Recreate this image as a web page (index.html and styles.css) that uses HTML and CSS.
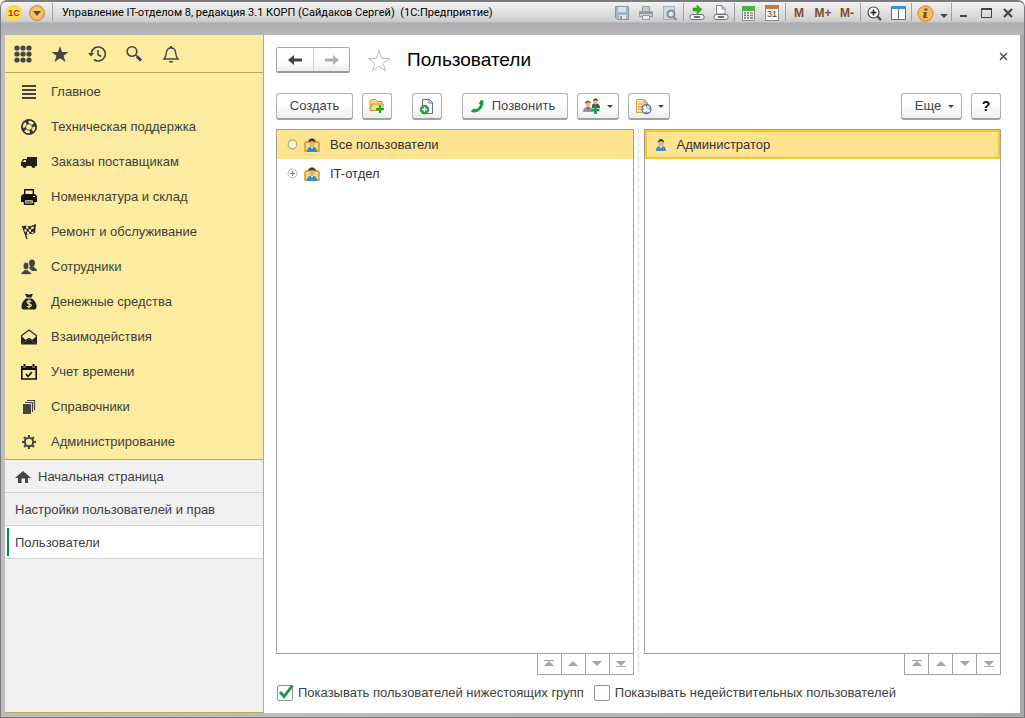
FILE: index.html
```html
<!DOCTYPE html>
<html lang="ru">
<head>
<meta charset="utf-8">
<title>Управление IT-отделом 8</title>
<link rel="stylesheet" href="styles.css">
</head>
<body>
<svg class="defs" aria-hidden="true">
  <symbol id="group" viewBox="0 0 16 16">
    <path d="M1 14V6l1-1h2l1-2h6l1 2h2l1 1v8z" fill="#fbd98a" stroke="#cf8f2c" stroke-width="1.400"/>
    <path d="M3 15c0-4 2-5.500 5-5.500s5 1.500 5 5.500z" fill="#3190c4"/>
    <path d="M6.500 9.500h3L8 12z" fill="#fff"/>
    <ellipse cx="8" cy="6.300" rx="2.700" ry="3.700" fill="#eeb066"/>
    <path d="M4.800 6C4.300-.5 11.700-.5 11.200 6 10.500 3.800 5.500 3.800 4.800 6z" fill="#3f3a35"/>
  </symbol>
  <symbol id="person" viewBox="0 0 12 14">
    <path d="M1 13c0-4 2-5 5-5s5 1 5 5z" fill="#3190c4"/>
    <path d="M4.500 8h3L6 10.500z" fill="#fff"/>
    <ellipse cx="6" cy="5" rx="2.600" ry="3.500" fill="#eeb066"/>
    <path d="M2.800 5C2.500-.5 9.500-.5 9.200 5 8 2.500 4 2.500 2.800 5z" fill="#3f3a35"/>
  </symbol>
  <symbol id="first" viewBox="0 0 10 8"><path d="M0 .500h10" stroke="#a6a6a6"/><path d="M5 1l5 5H0z" fill="#a6a6a6"/></symbol>
  <symbol id="up" viewBox="0 0 10 8"><path d="M5 1l5 5H0z" fill="#a6a6a6"/></symbol>
  <symbol id="down" viewBox="0 0 10 8"><path d="M5 6l5-5H0z" fill="#a6a6a6"/></symbol>
  <symbol id="last" viewBox="0 0 10 8"><path d="M0 6.500h10" stroke="#a6a6a6"/><path d="M5 6l5-5H0z" fill="#a6a6a6"/></symbol>
</svg>
<div class="window">
  <header class="titlebar">
    <button class="logo" aria-label="1С">1С</button>
    <button class="round" aria-label="Меню"><svg width="8" height="5"><path d="M0 0h8L4 5z" fill="#5a4a2c"/></svg></button>
    <i class="sep"></i>
    <h1 class="caption">Управление IT-отделом 8, редакция 3.1 КОРП (Сайдаков Сергей)&nbsp; (1С:Предприятие)</h1>
    <div class="tools">
      <button class="tool" aria-label="Сохранить"><svg width="14" height="14"><path d="M.500.500h13v13H2.500l-2-2z" fill="#a9b6c3" stroke="#8797a6"/><path d="M3 1h8v5H3z" fill="#dbe2e8"/><path d="M4 9h7v4H4z" fill="#dfe5ea"/><path d="M5 10h2v3H5z" fill="#8797a6"/></svg></button>
      <button class="tool" aria-label="Печать"><svg width="14" height="14"><path d="M3.500 5V.500h7V5M.500 5.500h13v5H.500z" fill="#c3cbd2" stroke="#8f9ba6"/><path d="M1 6h12v2H1z" fill="#8f9ba6"/><path d="M3.500 9.500h7v4h-7z" fill="#e8ebee" stroke="#8f9ba6"/></svg></button>
      <button class="tool" aria-label="Просмотр"><svg width="14" height="15"><path d="M.500.500h11v13H.500z" fill="#d3d9de" stroke="#a6b1bb"/><circle cx="8" cy="8" r="3.500" fill="#dfe5ea" stroke="#7e8f9e" stroke-width="2"/><path d="M10.500 11l3 3" stroke="#7e8f9e" stroke-width="2"/></svg></button>
      <i class="sep"></i>
      <button class="tool" aria-label="Перейти по ссылке"><svg width="16" height="16"><path d="M4 3h4V0l5 4.500L8 9V6H4z" fill="#31b51d" stroke="#188a10" stroke-width=".5"/><rect x="1" y="9.500" width="14" height="5" rx="2" fill="#eef1f3" stroke="#66737e"/><path d="M5 12h6" stroke="#66737e" stroke-width="2"/></svg></button>
      <button class="tool" aria-label="Получить ссылку"><svg width="16" height="16"><path d="M3.500 9V.500H9l3 3V9z" fill="#fff" stroke="#7a8793"/><path d="M9 1v3h3" fill="none" stroke="#7a8793"/><rect x="1" y="9.500" width="14" height="5" rx="2" fill="#eef1f3" stroke="#66737e"/><path d="M5 12h6" stroke="#66737e" stroke-width="2"/></svg></button>
      <i class="sep"></i>
      <button class="tool" aria-label="Калькулятор"><svg width="13" height="15"><path d="M.500.500h12v14H.500z" fill="#eef0f0" stroke="#8b9494"/><path d="M0 0h13v5H0z" fill="#44b649"/><path d="M2 7h2m1 0h2M2 9.500h2m1 0h2M2 12h2m1 0h2m1 0h3" stroke="#69757c" stroke-width="1.500"/><path d="M8 7h3M8 9.500h3" stroke="#e27070" stroke-width="1.500"/></svg></button>
      <button class="tool calendar" aria-label="Календарь">31</button>
      <i class="sep"></i>
      <button class="tool mem">M</button>
      <button class="tool mem">M+</button>
      <button class="tool mem">M-</button>
      <i class="sep"></i>
      <button class="tool" aria-label="Масштаб"><svg width="15" height="15"><circle cx="6.500" cy="6.500" r="5.500" fill="#fff" stroke="#444" stroke-width="1.200"/><path d="M3.500 6.500h6M6.500 3.500v6" stroke="#222" stroke-width="1.600"/><path d="M10.500 10.500l3.500 3.500" stroke="#444" stroke-width="2.200"/></svg></button>
      <button class="tool" aria-label="Панели"><svg width="15" height="14"><path d="M.500.500h14v13H.500z" fill="#fff" stroke="#5b6f80"/><path d="M0 0h15v3H0z" fill="#3b94d9"/><path d="M7.500 3v10" stroke="#5b6f80"/></svg></button>
      <i class="sep"></i>
      <button class="tool" aria-label="Справка"><svg width="17" height="17"><circle cx="8.500" cy="8.500" r="7.700" fill="#f7bd55" stroke="#c58a2c"/><path d="M7.500 3.500h3v2h-3zM6 7h4l-1 5h1.500v1H6l1-5H6z" fill="#61532f"/></svg></button>
      <button class="tool narrow" aria-label="Ещё"><svg width="8" height="10"><path d="M0 6h8l-4 4z" fill="#444"/></svg></button>
      <i class="sep"></i>
      <button class="tool sys" aria-label="Свернуть"><svg width="12" height="12"><path d="M2 8h7v2H2z" fill="#444"/></svg></button>
      <button class="tool sys" aria-label="Развернуть"><svg width="11" height="10"><path d="M.500.500h10v9H.500z" fill="none" stroke="#444"/><path d="M0 1h11" stroke="#444" stroke-width="2"/></svg></button>
      <button class="tool sys" aria-label="Закрыть"><svg width="10" height="10"><path d="M1 1l8 8M9 1L1 9" stroke="#444" stroke-width="2.200"/></svg></button>
    </div>
  </header>
  <div class="client">
    <aside class="sidebar">
      <div class="quick">
        <button aria-label="Разделы"><svg width="18" height="18" fill="#444"><circle cx="3" cy="3" r="2.600"/><circle cx="9" cy="3" r="2.600"/><circle cx="15" cy="3" r="2.600"/><circle cx="3" cy="9" r="2.600"/><circle cx="9" cy="9" r="2.600"/><circle cx="15" cy="9" r="2.600"/><circle cx="3" cy="15" r="2.600"/><circle cx="9" cy="15" r="2.600"/><circle cx="15" cy="15" r="2.600"/></svg></button>
        <button aria-label="Избранное"><svg width="18" height="18"><path d="M9 1l2 6h6.500l-5 3.700 2 6.300L9 13.200 3.500 17l2-6.300L.500 7H7z" fill="#444"/></svg></button>
        <button aria-label="История"><svg width="18" height="18" fill="none" stroke="#444" stroke-width="1.600"><path d="M3.300 8.500A7 7 0 1 1 6 14.500"/><path d="M0 8h6L3 11.500z" fill="#444" stroke="none"/><path d="M10 5v4.500l3 2"/></svg></button>
        <button aria-label="Поиск"><svg width="18" height="18" fill="none" stroke="#444"><circle cx="7" cy="6.500" r="4.800" stroke-width="1.600"/><path d="M10.500 10l2 1.500" stroke-width="1.500"/><path d="M12 11.500l4 4" stroke-width="3"/></svg></button>
        <button aria-label="Оповещения"><svg width="18" height="18"><path d="M2 14c2-2 2-3 2.300-6C4.600 4.500 6 3 9 3s4.400 1.500 4.700 5c.300 3 .300 4 2.300 6z" fill="none" stroke="#444" stroke-width="1.400"/><path d="M8 1h2v2H8zM6.500 16h5l-1 1.500h-3z" fill="#444"/></svg></button>
      </div>
      <nav class="menu">
        <a href="#"><svg viewBox="0 0 16 16"><path d="M1 2h14M1 6h14M1 10h14M1 14h14" stroke="#444" stroke-width="2"/></svg>Главное</a>
        <a href="#"><svg viewBox="0 0 16 16"><circle cx="8" cy="8" r="5.300" fill="none" stroke="#333" stroke-width="5"/><circle cx="8" cy="8" r="5" fill="none" stroke="#f8e99f" stroke-width="2.800" stroke-dasharray="5 2.850" stroke-dashoffset="1"/><circle cx="8" cy="8" r="7.200" fill="none" stroke="#333" stroke-width="1.200"/></svg>Техническая поддержка</a>
        <a href="#"><svg viewBox="0 0 16 16"><path d="M0 12V8.500L2 5h4V3h10v9z" fill="#222"/><path d="M1.500 8L3 6h2v2z" fill="#f8e99f"/><circle cx="3.500" cy="12" r="2" fill="#222"/><circle cx="12.500" cy="12" r="2" fill="#222"/></svg>Заказы поставщикам</a>
        <a href="#"><svg viewBox="0 0 16 16"><path d="M3.700 6V.700h8.600V6" fill="none" stroke="#111" stroke-width="1.400"/><path d="M2 5h12l2 2v6H0V7z" fill="#111"/><path d="M3.500 10.500h9v4.800h-9z" fill="#f8e99f" stroke="#111" stroke-width="1.400"/><path d="M5 13h6" stroke="#111"/><path d="M12 7.500h2" stroke="#f8e99f"/></svg>Номенклатура и склад</a>
        <a href="#"><svg viewBox="0 0 16 16"><path d="M1.500 2L6 15" stroke="#222" stroke-width="1.300"/><path d="M2 2c4-1 6 1 8 0l5-2-1 9c-3 2-6 0-9 2z" fill="#222"/><path d="M5 2l2 .500.500 2.500L5 4.500zM10 3l3-.500-.300 2.300-2.700.500zM3 5.500l2-.500 1 2.500-2 .500zM7.500 5l2.500.300V8L8 7.500zM6 7.500L8 8l.500 2H6zM10.500 8l2-.500v2h-2z" fill="#f8e99f"/></svg>Ремонт и обслуживание</a>
        <a href="#"><svg viewBox="0 0 16 16" fill="#444"><ellipse cx="11" cy="4" rx="3" ry="3.600"/><path d="M9.500 7h3c0 2 3.500 1.500 3.500 5h-5L8 9z"/><path d="M0 15.500c0-3.500 3.500-3 3.500-5h3c0 2 4 1.500 4 5z" stroke="#f8e99f" stroke-width=".7"/><ellipse cx="5" cy="7" rx="2.900" ry="3.700" stroke="#f8e99f" stroke-width=".7"/></svg>Сотрудники</a>
        <a href="#"><svg viewBox="0 0 16 16"><path d="M4 0h3l1 1 1.500-1H12l-1.800 3.500H5.800zM5 4.500h6c3 2 4.500 5 4.500 8 0 2.500-1 3-3 3h-9c-2 0-3-.500-3-3 0-3 1.500-6 4.500-8z" fill="#222"/><path d="M10.300 7.500c-1-1-4.300-1-4.300.800 0 2 4.300 1 4.300 3S6.500 13 5.700 12M8 5.500v9" fill="none" stroke="#f8e99f" stroke-width="1.200"/></svg>Денежные средства</a>
        <a href="#"><svg viewBox="0 0 16 16"><path d="M.700 14V6.500L8 1l7.300 5.500V14L8 9.500z" fill="#f8e99f" stroke="#222" stroke-width="1.200"/><path d="M0 7l5 4-5 4.500zM16 7l-5 4 5 4.500zM0 15.500L8 10l8 5.500z" fill="#222"/></svg>Взаимодействия</a>
        <a href="#"><svg viewBox="0 0 16 16"><path d="M.800 3h14.400v12H.800z" fill="none" stroke="#111" stroke-width="1.600"/><path d="M0 2h16v4H0zM2.500 0h2v3h-2zM11.500 0h2v3h-2z" fill="#111"/><path d="M2 3h3M11 3h3" stroke="#f8e99f" stroke-width=".8"/><path d="M5 10l2 2.500L11 8" fill="none" stroke="#111" stroke-width="1.600"/></svg>Учет времени</a>
        <a href="#"><svg viewBox="0 0 16 16"><path d="M2 5h8v10H2z" fill="#444"/><path d="M4 3.500h7.500V13M6 1.500h7.500V11" fill="none" stroke="#444" stroke-width="1.200"/></svg>Справочники</a>
        <a href="#"><svg viewBox="0 0 16 16"><circle cx="8" cy="8" r="4.200" fill="none" stroke="#444" stroke-width="2"/><path d="M8 1v3M8 12v3M1 8h3M12 8h3M3 3l2 2M11 11l2 2M13 3l-2 2M5 11l-2 2" stroke="#444" stroke-width="2"/></svg>Администрирование</a>
      </nav>
      <nav class="tabs">
        <a href="#" class="home"><svg width="16" height="14"><path d="M8 1l8 7h-3v5h-3V8.500H6.500V13H3V8H0z" fill="#444"/></svg>Начальная страница</a>
        <a href="#">Настройки пользователей и прав</a>
        <a href="#" class="current">Пользователи</a>
      </nav>
    </aside>
    <main class="main">
      <div class="heading">
        <div class="history">
          <button aria-label="Назад"><svg width="14" height="12"><path d="M0 6l6-5v3.600h8v2.800H6V11z" fill="#444"/></svg></button>
          <button aria-label="Вперед"><svg width="14" height="12"><path d="M14 6L8 1v3.600H0v2.800h8V11z" fill="#b0b0b0"/></svg></button>
        </div>
        <button class="fav" aria-label="В избранное"><svg width="24" height="23"><path d="M12 1.500l2.700 8h8l-6.500 4.700 2.500 7.800-6.700-4.800L5.300 22l2.500-7.800L1.300 9.500h8z" fill="#fff" stroke="#b4bcc4"/></svg></button>
        <h2>Пользователи</h2>
        <button class="close" aria-label="Закрыть"><svg width="9" height="9"><path d="M1 1l7 7M8 1L1 8" stroke="#444" stroke-width="1.200"/></svg></button>
      </div>
      <div class="commands">
        <button class="btn create">Создать</button>
        <button class="btn icon folder" aria-label="Создать группу"><svg width="16" height="16"><path d="M1 12.500V3l1.500-1.500h4L8 3.500h5V6l1.500.500L13 12.500z" fill="#fbdc84" stroke="#c99334"/><path d="M1.500 12L3 6h11" fill="none" stroke="#c99334"/><path d="M11 7v8M7 11h8" stroke="#12b012" stroke-width="2.200"/></svg></button>
        <button class="btn icon copy" aria-label="Скопировать"><svg width="16" height="17"><path d="M3.500 15.500V1.500h7l3 3v11z" fill="#f8fafb" stroke="#5f7284"/><path d="M10 1.500V5h3.500" fill="none" stroke="#5f7284"/><circle cx="5.500" cy="11.500" r="4.300" fill="#2fa24a" stroke="#1b7f35" stroke-width=".7"/><path d="M5.500 9v5M3 11.500h5" stroke="#fff" stroke-width="1.300"/></svg></button>
        <button class="btn call"><svg width="13" height="13"><path d="M9.500.500C11 0 12.500 0 12.500 1.500 12.700 7.500 8.500 12.500 2.500 12.500 1 12.500 0 11.500.200 10.500L3 8.500 5 9.300C7 8.500 8.500 6.700 9 4.800L8 3.300z" fill="#0f9a4c"/></svg>Позвонить</button>
        <button class="btn drop" aria-label="Добавить участников"><svg width="18" height="17"><path d="M9 9c0-3 1-4 3-4s5 1 5 5H9z" fill="#46516b"/><ellipse cx="12.500" cy="3.500" rx="2.300" ry="2.900" fill="#f1ba77"/><path d="M10 3C10-.5 15-.5 15 3c-1-1-4-1-5 0z" fill="#333"/><path d="M0 14c0-4 2-5 5-5s5 1 5 5z" fill="#8a9bb0"/><path d="M4 9h2.500L5.200 14z" fill="#d63a2c"/><ellipse cx="5" cy="6" rx="2.500" ry="3.200" fill="#f1ba77"/><path d="M2 6C1.500 1.500 8 1.500 7.800 6 7 4 3.500 4 2 6z" fill="#8a4b22"/><path d="M12.500 8v8M8.500 12h8" stroke="#0f9f45" stroke-width="2.600"/></svg><i class="caret"></i></button>
        <button class="btn drop" aria-label="Отчеты"><svg width="17" height="17"><path d="M1.500 14.500V1.500h8l3 3v10z" fill="#fbe29a" stroke="#cda348"/><path d="M9 1.500V5h3.500M3 6h5M3 8.500h4M3 11h3" fill="none" stroke="#cda348"/><circle cx="11.500" cy="11" r="4.500" fill="#fff" stroke="#3e78b2" stroke-width="1.300"/><path d="M11.500 11V7.500a3.500 3.500 0 0 1 3.500 3.500z" fill="#b6d4ee"/><path d="M11.500 7v1.500M11.500 13.500V15M7.500 11H9M14 11h1.500" stroke="#d62828" stroke-width="1.200"/></svg><i class="caret"></i></button>
        <button class="btn more">Еще<i class="caret"></i></button>
        <button class="btn icon help">?</button>
      </div>
      <div class="panes">
        <section class="pane">
          <ul class="list">
            <li class="row active"><svg class="node" width="11" height="11"><circle cx="5.500" cy="5.500" r="4.300" fill="#fff8d8" stroke="#b5ab85" stroke-width="1.200"/></svg><svg width="16" height="16"><use href="#group"/></svg>Все пользователи</li>
            <li class="row"><svg class="node" width="11" height="11"><circle cx="5.500" cy="5.500" r="4.500" fill="#fff" stroke="#b5b5b5"/><path d="M3 5.500h5M5.500 3v5" stroke="#777"/></svg><svg width="16" height="16"><use href="#group"/></svg>IT-отдел</li>
          </ul>
          <div class="pager">
            <button aria-label="В начало"><svg width="10" height="8"><use href="#first"/></svg></button><button aria-label="Вверх"><svg width="10" height="8"><use href="#up"/></svg></button><button aria-label="Вниз"><svg width="10" height="8"><use href="#down"/></svg></button><button aria-label="В конец"><svg width="10" height="8"><use href="#last"/></svg></button>
          </div>
        </section>
        <div class="splitter"></div>
        <section class="pane">
          <ul class="list">
            <li class="row user"><svg width="12" height="14"><use href="#person"/></svg>Администратор</li>
          </ul>
          <div class="pager">
            <button aria-label="В начало"><svg width="10" height="8"><use href="#first"/></svg></button><button aria-label="Вверх"><svg width="10" height="8"><use href="#up"/></svg></button><button aria-label="Вниз"><svg width="10" height="8"><use href="#down"/></svg></button><button aria-label="В конец"><svg width="10" height="8"><use href="#last"/></svg></button>
          </div>
        </section>
      </div>
      <div class="options">
        <label><span class="check"><input type="checkbox" checked><svg width="17" height="16"><path d="M3 7l4 4.500L15.500.500" fill="none" stroke="#0f9a4c" stroke-width="2.800"/></svg></span>Показывать пользователей нижестоящих групп</label>
        <label><span class="check"><input type="checkbox"><svg width="17" height="16"><path d="M3 7l4 4.500L15.500.500" fill="none" stroke="#0f9a4c" stroke-width="2.800"/></svg></span>Показывать недействительных пользователей</label>
      </div>
    </main>
  </div>
</div>
</body>
</html>
```
FILE: styles.css
```css
* { box-sizing: border-box; }
body { margin: 0; font: 13px/16px "Liberation Sans", Arial, sans-serif; color: #404040; background: #fff; }
button { font: inherit; color: inherit; padding: 0; margin: 0; border: 0; background: none; display: flex; align-items: center; justify-content: center; }
a { color: inherit; text-decoration: none; }
h1, h2, ul { margin: 0; padding: 0; font-weight: normal; list-style: none; }
svg { flex: none; display: block; }
.defs { position: absolute; width: 0; height: 0; }

.window { height: 100vh; display: flex; flex-direction: column; padding: 0 4px 4px; border: 1px solid #7d7a7f; border-top-width: 2px; border-radius: 7px 7px 0 0; background: linear-gradient(90deg, #bfbdbf, #b8b8ba 50%, #a9a9ad); }

.titlebar { height: 33px; flex: none; display: flex; align-items: flex-start; margin: 0 -4px; padding: 0 5px; background: linear-gradient(#f2f2f2, #cfcfd0 19px, #c3c3c4 20px, #aeaeb0 21px, #b7b7b8 33px); border-radius: 5px 5px 0 0; }
.titlebar > * { height: 22px; }
.titlebar .sep { width: 1px; height: 18px; margin: 1px 1px 0; background: #a0a0a2; flex: none; }
.titlebar .logo, .titlebar .round { width: 16px; height: 16px; margin-top: 3px; border-radius: 50%; flex: none; }
.titlebar .logo { background: radial-gradient(#fff27a, #fbd93a 70%, #eab93a); font-weight: bold; font-size: 9px; color: #d81414; }
.titlebar .round { margin: 3px 6px 0 7px; background: radial-gradient(#fbd488, #f1ab45); border: 1px solid #c08a3c; }
.caption { flex: 1; min-width: 0; margin-left: 8px; font: 11px/22px Roboto, sans-serif; color: #000; white-space: nowrap; overflow: hidden; }
.tools { display: flex; align-items: flex-start; flex: none; }
.tool { width: 24px; height: 22px; }
.narrow { width: 13px; }
.sys { width: 22px; }
.mem { font-weight: bold; font-size: 12px; color: #854c29; }
.titlebar .calendar { width: 14px; height: 16px; margin: 3px 5px; border: 1px solid #8b8b8b; border-top: 4px solid #c9783e; background: #fafafa; font-size: 9px; line-height: 11px; }

.client { flex: 1; min-height: 0; display: flex; background: #fff; }

.sidebar { width: 259px; flex: none; background: #f1f1f1; border-right: 1px solid #b9ae5a; border-bottom: 1px solid #b9ae5a; }
.quick { height: 38px; display: flex; align-items: center; gap: 19px; padding-left: 9px; background: #fbec9f; border-bottom: 1px solid #b9a951; }
.menu { background: #fbec9f; padding-top: 1px; border-bottom: 1px solid #b9a951; }
.menu a { height: 35px; display: flex; align-items: center; gap: 14px; padding-left: 16px; }
.menu svg { width: 16px; height: 16px; }
.tabs a { height: 33px; display: flex; align-items: center; gap: 7px; padding: 2px 0 0 10px; border-bottom: 1px solid #d3d3d3; }
.tabs .current { background: linear-gradient(#009646, #009646) 2px 2px / 2px 28px no-repeat #fff; }

.main { flex: 1; min-width: 0; display: flex; flex-direction: column; padding: 12px 19px 12px 12px; }
.heading { display: flex; align-items: center; height: 26px; }
.history { display: flex; height: 26px; border: 1px solid #a9a9a9; border-bottom: 2px solid #9b9b9b; border-radius: 2px; background: linear-gradient(#fff 50%, #ededed); }
.history button { width: 36px; }
.history button + button { border-left: 1px solid #d0d0d0; }
.fav { margin: 0 16px 0 17px; }
h2 { font-size: 19px; line-height: 24px; color: #000; }
.close { margin: -7px -13px 0 auto; width: 21px; height: 20px; }

.commands { display: flex; margin: 20px 0 9px; }
.btn { height: 27px; border: 1px solid #b0b0b0; border-bottom: 2px solid #a2a2a2; border-radius: 3px; background: linear-gradient(#fff 45%, #ededed); color: #444; flex: none; }
.create { width: 77px; margin-right: 9px; }
.icon { width: 30px; }
.folder, .copy { margin-right: 20px; }
.call { width: 106px; gap: 8px; margin-right: 9px; padding-right: 4px; }
.drop { width: 42px; gap: 6px; margin-right: 9px; }
.caret { border: 3px solid transparent; border-top-color: #444; border-bottom: 0; }
.more { width: 61px; gap: 7px; margin: 0 9px 0 auto; padding-left: 6px; }
.help { color: #000; font-size: 14px; font-weight: bold; }

.panes { flex: 1; min-height: 0; display: flex; }
.pane { flex: 1; min-width: 0; display: flex; flex-direction: column; }
.list { flex: 1; min-height: 0; border: 1px solid #a0a0a0; overflow: auto; }
.row { height: 29px; display: flex; align-items: center; gap: 10px; padding-left: 10px; color: #333; }
.row .node { margin-right: -4px; }
.row.active { background: #fee491; }
.row.user { background: #fee491; border: 2px solid #fac824; padding-left: 8px; }
.pager { align-self: flex-end; display: flex; height: 21px; border: 1px solid #a0a0a0; border-top: 0; }
.pager button { width: 24px; }
.pager button:first-child { width: 23px; }
.pager button + button { border-left: 1px solid #a0a0a0; }
.splitter { width: 10px; background: repeating-linear-gradient(#d4d4d4 0 4px, #fff 4px 7px) 4px 0 / 1px 100% no-repeat; }

.options { display: flex; align-items: center; gap: 10px; margin-top: 10px; padding-left: 1px; }
.options label { display: flex; align-items: center; gap: 5px; white-space: nowrap; }
.check { position: relative; width: 16px; height: 16px; }
.check input { appearance: none; display: block; width: 16px; height: 16px; margin: 0; border: 1px solid #949494; border-radius: 2px; background: #fff; }
.check svg { position: absolute; left: 0; top: 0; visibility: hidden; pointer-events: none; }
.check input:checked + svg { visibility: visible; }
```
